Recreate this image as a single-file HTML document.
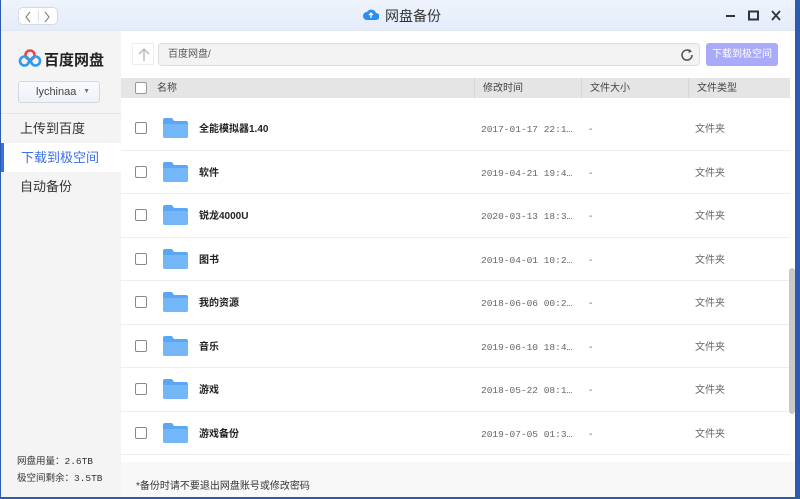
<!DOCTYPE html>
<html><head><meta charset="utf-8"><style>
*{margin:0;padding:0;box-sizing:border-box}
body{width:800px;height:499px;overflow:hidden;background:#2a5db0;font-family:"Liberation Sans","Noto Sans CJK SC",sans-serif;position:relative}
.win{position:absolute;left:1px;top:0;width:794px;height:497px;background:#fff;overflow:hidden}
.title{position:absolute;left:0;top:0;width:794px;height:31px;background:linear-gradient(#eef3fc,#e4ecfb);border-bottom:1px solid #e3e8ef}
.nav{position:absolute;left:17px;top:7px;width:40px;height:18px;border:1px solid #d6d9df;border-radius:5px;background:#fff}
.nav:after{content:"";position:absolute;left:19px;top:2px;width:1px;height:12px;background:#ddd}
.ttl{position:absolute;left:364px;top:6px;font-size:14px;color:#333}
.side{position:absolute;left:0;top:31px;width:120px;height:466px;background:#f4f4f5}
.menu{position:absolute;left:0;width:120px;height:29px;font-size:13px;color:#333;padding-left:19px;line-height:29px}
.main{position:absolute;left:120px;top:31px;width:674px;height:466px;background:#fff}
.hdr{position:absolute;left:0;top:47px;width:669px;height:20px;background:#e5e5e5;font-size:10px;color:#444;line-height:20px}
.hdr span{position:absolute;top:1px}
.sep{position:absolute;top:0;width:1px;height:20px;background:#d6d6d6}
.cb{position:absolute;width:12px;height:12px;border:1.5px solid #888;border-radius:2px;background:#fff}
.row{position:absolute;left:0;width:669px;height:43.5px;border-bottom:1px solid #eee;font-size:10px;line-height:45px}
.row div{position:absolute;top:0}
.row .cb{top:15px}
.fold{position:absolute;left:42px;top:11px;width:25px;height:20px}
.nm{left:78px;font-weight:bold;color:#222}
.dt{left:360px;color:#666;font-family:"Liberation Mono","Noto Sans CJK SC",monospace;font-size:9.5px}
.ds{left:468px;color:#666}
.ty{left:574px;color:#666}
.foot{position:absolute;left:0;top:431px;width:674px;height:35px;background:#f8f8f8;font-size:10px;color:#333;padding:15px 0 0 15px}
</style></head><body>
<div class="win">
 <div class="title">
  <div class="nav"><svg width="40" height="18" style="position:absolute;left:0;top:0"><path d="M11 4 L7 9 L11 14" stroke="#888" fill="none" stroke-width="1.2"/><path d="M26 4 L30 9 L26 14" stroke="#888" fill="none" stroke-width="1.2"/></svg></div>
  <svg style="position:absolute;left:362px;top:8px" width="16" height="13"><path d="M4 12 a4 4 0 0 1 0-8 a5 5 0 0 1 9 1 a3.5 3.5 0 0 1 0 7z" fill="#2a8ef0"/><path d="M8 10 V5 M6 7 L8 5 L10 7" stroke="#fff" stroke-width="1.3" fill="none"/></svg>
  <div class="ttl" style="left:384px">网盘备份</div>
  <svg style="position:absolute;left:720px;top:9px" width="62" height="14"><path d="M5 7 H14" stroke="#333" stroke-width="2"/><rect x="28" y="2.5" width="9" height="8" fill="none" stroke="#333" stroke-width="2"/><path d="M51 2 L59 11 M59 2 L51 11" stroke="#333" stroke-width="1.8"/></svg>
 </div>
 <div class="side">
  <svg style="position:absolute;left:17px;top:17px" width="24" height="20"><circle cx="12" cy="7" r="4.5" fill="none" stroke="#e8474c" stroke-width="2.6"/><circle cx="6.5" cy="13" r="4.5" fill="none" stroke="#2d9bf0" stroke-width="2.6"/><circle cx="17.5" cy="13" r="4.5" fill="none" stroke="#2d9bf0" stroke-width="2.6"/></svg>
  <div style="position:absolute;left:43px;top:18px;font-size:15px;font-weight:bold;color:#222">百度网盘</div>
  <div style="position:absolute;left:17px;top:50px;width:82px;height:22px;border:1px solid #d2d8e2;border-radius:3px;background:linear-gradient(#f8fafd,#eef2f7);font-size:11px;color:#444;line-height:20px;padding-left:17px">lychinaa<span style="position:absolute;right:9px;top:0;font-size:7px;color:#777">▼</span></div>
  <div style="position:absolute;left:0;top:82px;width:120px;height:1px;background:#e4e4e4"></div>
  <div class="menu" style="top:83px">上传到百度</div>
  <div class="menu" style="top:112px;background:#fff;color:#3a6fe8;border-left:3px solid #3a6fe8;padding-left:17px">下载到极空间</div>
  <div class="menu" style="top:141px">自动备份</div>
  <div style="position:absolute;left:16px;top:422px;font-size:9.5px;color:#333;line-height:17px;font-family:'Liberation Mono','Noto Sans CJK SC',monospace">网盘用量：2.6TB<br>极空间剩余：3.5TB</div>
 </div>
 <div class="main">
  <div style="position:absolute;left:11px;top:12px;width:22px;height:22px;border:1px solid #eee;background:#fff"><svg width="22" height="22"><path d="M11 17 V5 M6 10 L11 5 L16 10" stroke="#bbb" stroke-width="1.5" fill="none"/></svg></div>
  <div style="position:absolute;left:37px;top:12px;width:542px;height:23px;border:1px solid #ddd;border-radius:4px;background:#f3f3f3;font-size:10px;color:#555;line-height:21px;padding-left:9px">百度网盘/<svg style="position:absolute;right:5px;top:4px" width="14" height="14"><path d="M12 7 A5 5 0 1 1 10.5 3.5" stroke="#555" stroke-width="1.6" fill="none"/><path d="M9 1 L12 3.5 L8.5 5" fill="#555"/></svg></div>
  <div style="position:absolute;left:585px;top:12px;width:72px;height:23px;border-radius:3px;background:#a9aaf9;color:#fff;font-size:10px;line-height:23px;text-align:center">下载到极空间</div>
  <div class="hdr">
   <div class="cb" style="left:14px;top:4px;border-color:#999"></div>
   <span style="left:36px">名称</span>
   <div class="sep" style="left:353px"></div><span style="left:362px">修改时间</span>
   <div class="sep" style="left:460px"></div><span style="left:469px">文件大小</span>
   <div class="sep" style="left:567px"></div><span style="left:576px">文件类型</span>
  </div>
  <div id="rows"></div>
  <div style="position:absolute;left:668px;top:237px;width:6px;height:146px;background:#c9c9c9;border-radius:3px"></div>
  <div class="foot">*备份时请不要退出网盘账号或修改密码</div>
 </div>
</div>
<script>
var d=[["全能模拟器1.40","2017-01-17 22:1…"],["软件","2019-04-21 19:4…"],["锐龙4000U","2020-03-13 18:3…"],["图书","2019-04-01 10:2…"],["我的资源","2018-06-06 00:2…"],["音乐","2019-06-10 18:4…"],["游戏","2018-05-22 08:1…"],["游戏备份","2019-07-05 01:3…"]];
var h="";d.forEach(function(r,i){var t=76+i*43.5;
h+='<div class="row" style="top:'+t+'px"><div class="cb" style="left:14px"></div><svg class="fold" viewBox="0 0 25 20"><path d="M0 2 Q0 0 2 0 H9 L11 3 H23 Q25 3 25 5 V18 Q25 20 23 20 H2 Q0 20 0 18Z" fill="#5aa8f5"/><path d="M0 6 H25 V18 Q25 20 23 20 H2 Q0 20 0 18Z" fill="#74b7f8"/></svg><div class="nm">'+r[0]+'</div><div class="dt">'+r[1]+'</div><div class="ds">-</div><div class="ty">文件夹</div></div>';});
document.getElementById("rows").innerHTML=h;
</script>
</body></html>
